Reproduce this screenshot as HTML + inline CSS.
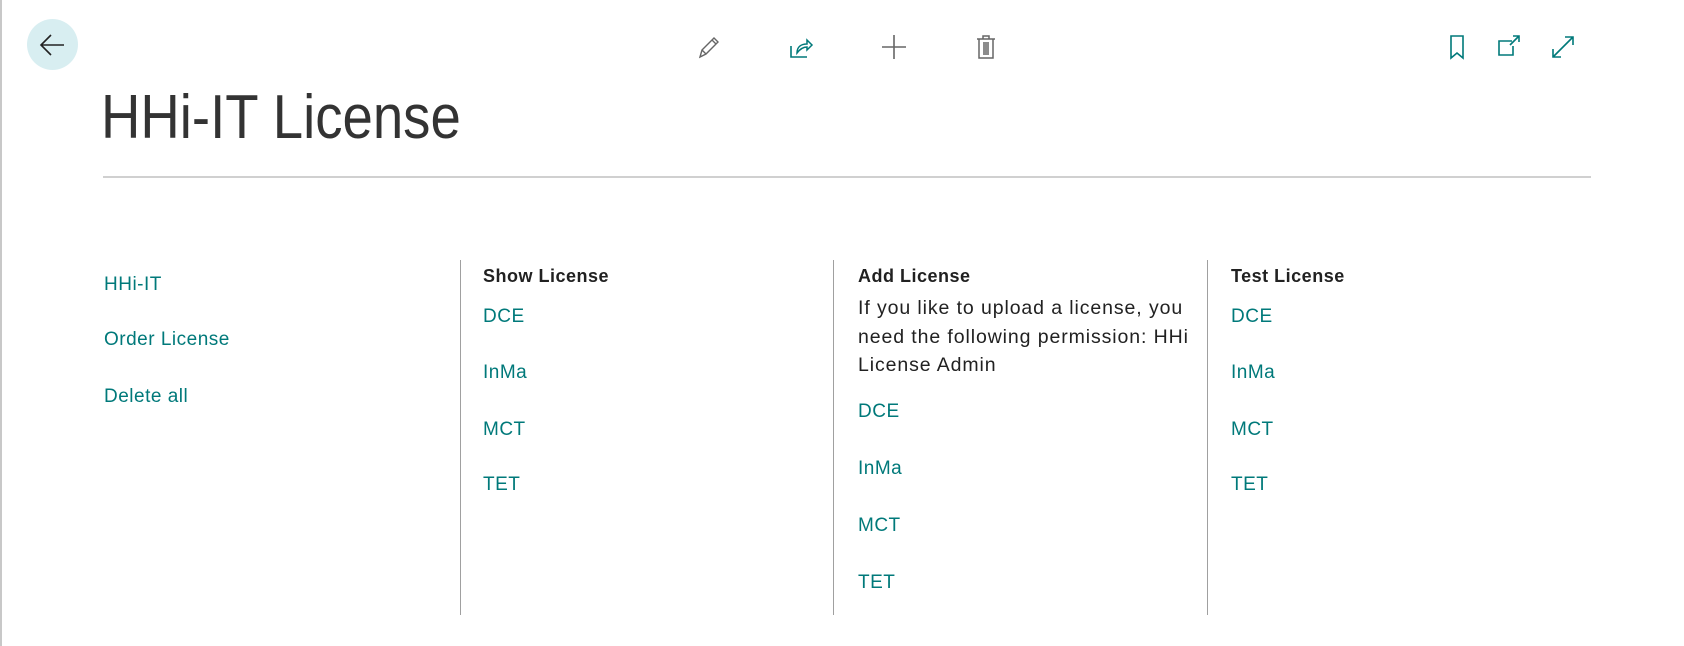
<!DOCTYPE html>
<html><head><style>
body{margin:0;width:1684px;height:646px;background:#fff;position:relative;overflow:hidden;font-family:"Liberation Sans",sans-serif;font-size:19px;letter-spacing:0.5px;color:#212121}
.t{position:absolute;line-height:28px;white-space:nowrap}
.l{color:#00797a}
.b{font-weight:bold;font-size:18px}
.p{font-size:19.5px;letter-spacing:0.9px}
.v{position:absolute;top:260px;height:355px;width:1px;background:#a0a0a0}
svg{position:absolute}
</style></head><body>
<div style="position:absolute;left:0;top:0;width:2px;height:646px;background:#c8c8c8"></div>
<div style="position:absolute;left:27px;top:19px;width:51px;height:51px;border-radius:50%;background:#d8eef1"></div>
<svg style="left:38px;top:31px" width="28" height="28" viewBox="0 0 28 28"><path d="M26 14H3M13 4L3 14l10 10" fill="none" stroke="#222" stroke-width="1.6"/></svg>
<svg style="left:696px;top:34px" width="26" height="26" viewBox="0 0 26 26"><path d="M4 23l2-7L18 4l4 4L10 20zM6 16l4 4M16 6l4 4" fill="none" stroke="#666" stroke-width="1.4"/></svg>
<svg style="left:788px;top:34px" width="26" height="26" viewBox="0 0 26 26"><path d="M3 12v11h16" fill="none" stroke="#00797a" stroke-width="1.6"/><path d="M9 19c0-6 4-9 10-9V6l5 5-5 5v-3c-4 0-7 2-10 6z" fill="none" stroke="#00797a" stroke-width="1.5"/></svg>
<svg style="left:881px;top:34px" width="26" height="26" viewBox="0 0 26 26"><path d="M13 1v24M1 13h24" stroke="#666" stroke-width="1.6"/></svg>
<svg style="left:973px;top:34px" width="26" height="26" viewBox="0 0 26 26"><path d="M4 5h18M10 5V2h6v3M6 5v19h14V5M11 8v13M13 8v13M15 8v13" fill="none" stroke="#666" stroke-width="1.5"/></svg>
<svg style="left:1444px;top:34px" width="26" height="26" viewBox="0 0 26 26"><path d="M7 2h12v22l-6-5-6 5z" fill="none" stroke="#00797a" stroke-width="1.6"/></svg>
<svg style="left:1496px;top:34px" width="26" height="26" viewBox="0 0 26 26"><path d="M16 7H3v14h14V12M14 11l9-9M17 2h6v6" fill="none" stroke="#00797a" stroke-width="1.6"/></svg>
<svg style="left:1550px;top:34px" width="26" height="26" viewBox="0 0 26 26"><path d="M3 23L23 3M15 3h8v8M3 15v8h8" fill="none" stroke="#00797a" stroke-width="1.6"/></svg>
<div class="t" style="left:101px;top:78px;font-size:62px;line-height:80px;letter-spacing:0;color:#333;transform:scaleX(0.88);transform-origin:left">HHi-IT License</div>
<div style="position:absolute;left:103px;top:176px;width:1488px;height:2px;background:#d0d0d0"></div>
<div class="v" style="left:460px"></div><div class="v" style="left:833px"></div><div class="v" style="left:1207px"></div>
<div class="t l" style="left:104px;top:271px">HHi-IT</div>
<div class="t l" style="left:104px;top:326px">Order License</div>
<div class="t l" style="left:104px;top:383px">Delete all</div>
<div class="t b" style="left:483px;top:262px">Show License</div>
<div class="t l" style="left:483px;top:303px">DCE</div>
<div class="t l" style="left:483px;top:359px">InMa</div>
<div class="t l" style="left:483px;top:416px">MCT</div>
<div class="t l" style="left:483px;top:471px">TET</div>
<div class="t b" style="left:858px;top:262px">Add License</div>
<div class="t p" style="left:858px;top:294px">If you like to upload a license, you</div>
<div class="t p" style="left:858px;top:323px">need the following permission: HHi</div>
<div class="t p" style="left:858px;top:351px">License Admin</div>
<div class="t l" style="left:858px;top:398px">DCE</div>
<div class="t l" style="left:858px;top:455px">InMa</div>
<div class="t l" style="left:858px;top:512px">MCT</div>
<div class="t l" style="left:858px;top:569px">TET</div>
<div class="t b" style="left:1231px;top:262px">Test License</div>
<div class="t l" style="left:1231px;top:303px">DCE</div>
<div class="t l" style="left:1231px;top:359px">InMa</div>
<div class="t l" style="left:1231px;top:416px">MCT</div>
<div class="t l" style="left:1231px;top:471px">TET</div>
</body></html>
